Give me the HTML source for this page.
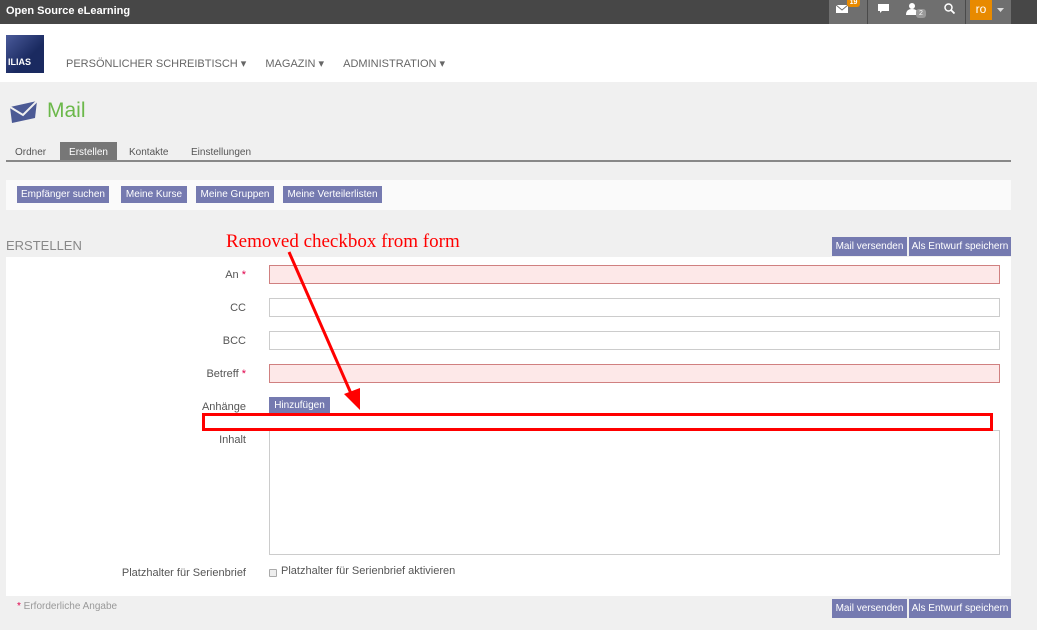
<!DOCTYPE html>
<html><head><meta charset="utf-8">
<style>
*{box-sizing:border-box;margin:0;padding:0}
body{width:1037px;height:630px;overflow:hidden;background:#f0f0f0;font-family:"Liberation Sans",sans-serif;font-size:11px;color:#444;position:relative}
.abs{position:absolute}
.top{left:0;top:0;width:1037px;height:24px;background:#474747}
.btn{position:absolute;background:#757ab0;color:#fff;font-size:10px;height:17px;line-height:18px;text-align:center;white-space:nowrap}
.lbl{position:absolute;right:791px;font-size:11px;color:#555;text-align:right;white-space:nowrap}
.inp{position:absolute;left:269px;width:731px;height:19px;background:#fff;border:1px solid #ccc}
.err{background:#fde8e8;border-color:#d08080}
.star{color:#e0004a}
</style></head><body>
<div class="abs top"></div>
<div class="abs" style="left:6px;top:5px;color:#fff;font-weight:bold;font-size:11px">Open Source eLearning</div>
<div class="abs" style="left:829px;top:0;width:182px;height:24px;background:#6f6f6f"></div>
<div class="abs" style="left:867px;top:0;width:1px;height:24px;background:#4a4a4a"></div>
<div class="abs" style="left:965px;top:0;width:1px;height:24px;background:#4a4a4a"></div>
<svg class="abs" style="left:836px;top:4px" width="12" height="10" viewBox="0 0 12 10"><rect x="0" y="1" width="12" height="8" fill="#fff"/><path d="M0 1L6 6L12 1" stroke="#6f6f6f" fill="none"/></svg>
<div class="abs" style="left:847px;top:0;width:13px;height:7px;background:#e88a00;border-radius:0 0 3px 3px;color:#fff;font-size:7px;line-height:5px;text-align:center;font-weight:bold">19</div>
<svg class="abs" style="left:878px;top:4px" width="11" height="10"><path d="M0 0H11V7H4L2 9V7H0Z" fill="#fff"/></svg>
<svg class="abs" style="left:906px;top:3px" width="12" height="12"><circle cx="6" cy="3" r="3" fill="#fff"/><path d="M0 12Q0 6 6 6Q12 6 12 12Z" fill="#fff"/></svg>
<div class="abs" style="left:916px;top:9px;width:10px;height:9px;background:#999;border-radius:3px;color:#fff;font-size:7px;text-align:center;line-height:9px">2</div>
<svg class="abs" style="left:944px;top:3px" width="11" height="11"><circle cx="4.5" cy="4.5" r="3.5" stroke="#fff" stroke-width="1.5" fill="none"/><path d="M7 7L10.5 10.5" stroke="#fff" stroke-width="1.8"/></svg>
<div class="abs" style="left:970px;top:0;width:22px;height:20px;background:#e88a00;color:#fff;font-size:12px;text-align:center;line-height:19px">ro</div>
<svg class="abs" style="left:997px;top:8px" width="7" height="4"><path d="M0 0H7L3.5 4Z" fill="#ddd"/></svg>

<div class="abs" style="left:0;top:24px;width:1037px;height:58px;background:#fff"></div>
<div class="abs" style="left:6px;top:35px;width:38px;height:38px;background:linear-gradient(135deg,#4a5a9a,#1a2a60 60%);color:#fff;font-weight:bold;font-size:9px;padding:22px 0 0 2px">ILIAS</div>
<div class="abs" style="left:66px;top:57px;color:#666;font-size:11px;white-space:nowrap">PERSÖNLICHER SCHREIBTISCH ▾ <span style="margin-left:16px">MAGAZIN ▾</span> <span style="margin-left:16px">ADMINISTRATION ▾</span></div>

<svg class="abs" style="left:9px;top:101px" width="29" height="22"><path d="M1 6L28 0L26 17L3 22Z" fill="#4c5a95"/><path d="M1 6L14 14L28 0" stroke="#f0f0f0" stroke-width="2" fill="none"/></svg>
<div class="abs" style="left:47px;top:99px;color:#6bb84a;font-size:21px">Mail</div>

<div class="abs" style="left:15px;top:147px;color:#555;font-size:10px">Ordner</div>
<div class="abs" style="left:60px;top:142px;width:57px;height:19px;background:#777;color:#fff;font-size:10px;text-align:center;line-height:21px">Erstellen</div>
<div class="abs" style="left:129px;top:147px;color:#555;font-size:10px">Kontakte</div>
<div class="abs" style="left:191px;top:147px;color:#555;font-size:10px">Einstellungen</div>
<div class="abs" style="left:6px;top:160px;width:1005px;height:2px;background:#888"></div>

<div class="abs" style="left:6px;top:180px;width:1005px;height:30px;background:#fafafa"></div>
<div class="btn" style="left:17px;top:186px;width:92px">Empfänger suchen</div>
<div class="btn" style="left:121px;top:186px;width:66px">Meine Kurse</div>
<div class="btn" style="left:196px;top:186px;width:78px">Meine Gruppen</div>
<div class="btn" style="left:283px;top:186px;width:99px">Meine Verteilerlisten</div>

<div class="abs" style="left:6px;top:238px;color:#888;font-size:13px">ERSTELLEN</div>
<div class="btn" style="left:832px;top:237px;width:75px;height:19px;line-height:20px">Mail versenden</div>
<div class="btn" style="left:909px;top:237px;width:102px;height:19px;line-height:20px">Als Entwurf speichern</div>

<div class="abs" style="left:6px;top:257px;width:1005px;height:339px;background:#fff"></div>
<div class="lbl" style="top:269px">An <span class="star">*</span></div>
<div class="inp err" style="top:265px"></div>
<div class="lbl" style="top:302px">CC</div>
<div class="inp" style="top:298px"></div>
<div class="lbl" style="top:335px">BCC</div>
<div class="inp" style="top:331px"></div>
<div class="lbl" style="top:368px">Betreff <span class="star">*</span></div>
<div class="inp err" style="top:364px"></div>
<div class="lbl" style="top:401px">Anhänge</div>
<div class="btn" style="left:269px;top:397px;width:61px">Hinzufügen</div>
<div class="lbl" style="top:434px">Inhalt</div>
<div class="inp" style="top:430px;height:125px"></div>
<div class="lbl" style="top:567px">Platzhalter für Serienbrief</div>
<div class="abs" style="left:269px;top:569px;width:8px;height:8px;border:1px solid #aaa;background:#eee;border-radius:1px"></div>
<div class="abs" style="left:281px;top:565px;color:#555">Platzhalter für Serienbrief aktivieren</div>

<div class="abs" style="left:17px;top:601px;color:#999;font-size:10px"><span class="star">*</span> Erforderliche Angabe</div>
<div class="btn" style="left:832px;top:599px;width:75px;height:19px;line-height:20px">Mail versenden</div>
<div class="btn" style="left:909px;top:599px;width:102px;height:19px;line-height:20px">Als Entwurf speichern</div>

<div class="abs" style="left:202px;top:413px;width:791px;height:18px;border:3px solid #f00"></div>
<div class="abs" style="left:226px;top:231px;color:#f00;font-family:'Liberation Serif',serif;font-size:19px;white-space:nowrap">Removed checkbox from form</div>
<svg class="abs" style="left:280px;top:248px" width="90" height="170"><path d="M9 4L73 150" stroke="#f00" stroke-width="3"/><path d="M64 146L80 162L80 140Z" fill="#f00"/></svg>
</body></html>
